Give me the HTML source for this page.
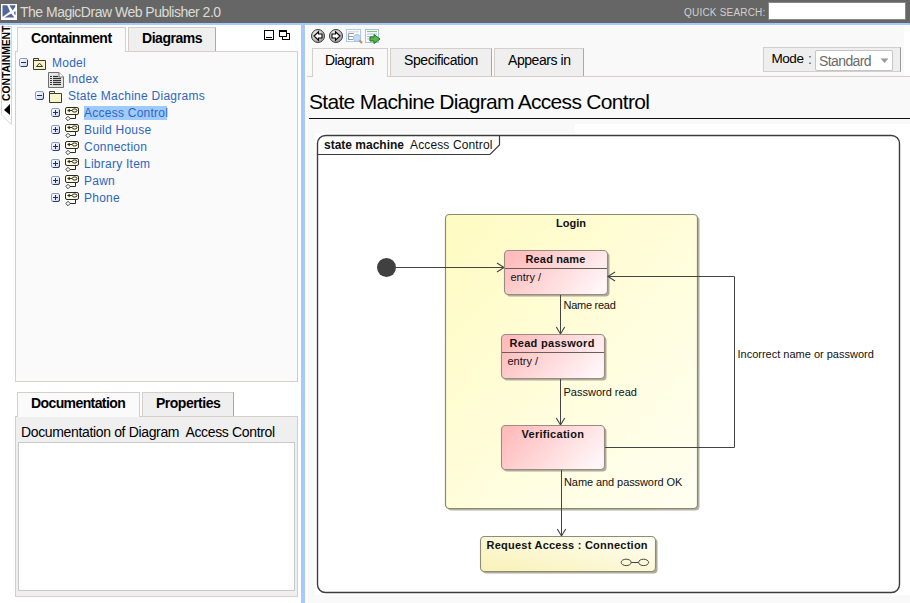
<!DOCTYPE html>
<html><head><meta charset="utf-8">
<style>
*{box-sizing:border-box;margin:0;padding:0}
html,body{width:910px;height:603px;overflow:hidden;background:#fff;font-family:"Liberation Sans",sans-serif;position:relative}
.a{position:absolute}
.t{position:absolute;white-space:nowrap;line-height:1}
#top{left:0;top:0;width:910px;height:23px;background:#666}
#bl{left:0;top:23px;width:910px;height:2px;background:#a8c9fb}
#split{left:301px;top:25px;width:4px;height:578px;background:#a8c9fb}
#rp{left:307px;top:25px;width:603px;height:578px;background:#f9f9f9}
.tab{position:absolute;border:1px solid #d4d0c8;border-bottom:none;background:#efefef}
.tabd{border-right-color:#a9a9a9}
.box{position:absolute;border:1px solid #d4d0c8}
.tree{color:#2d66c0;font-size:12px;letter-spacing:0.25px}
</style></head><body>
<div class="a" id="top"></div>
<div class="a" id="bl"></div>
<div class="a" id="split"></div>
<div class="a" style="left:305px;top:25px;width:2px;height:578px;background:#fff"></div>
<div class="a" id="rp"></div>

<!-- title bar -->
<div class="a" style="left:1px;top:4px;width:16px;height:16px;background:#fff"></div>
<svg class="a" style="left:1px;top:4px" width="16" height="16" viewBox="0 0 16 16">
  <polygon points="1.5,1.2 6.2,1.2 9,7.4 2.2,12.6 1.5,12.6" fill="#51669a"/>
  <polygon points="8.4,1.2 14.4,1.2 14.2,3 11.6,6.4" fill="#51669a"/>
  <polygon points="3.4,13.6 10.2,9.6 13.4,13.6" fill="#51669a"/>
  <polygon points="13,7.8 14.6,7.6 14.6,10.8 13.4,10.6" fill="#51669a"/>
</svg>
<div class="t" style="left:20px;top:5px;font-size:14px;letter-spacing:-0.5px;color:#dddcd4">The MagicDraw Web Publisher 2.0</div>
<div class="t" style="left:684px;top:8px;font-size:10px;letter-spacing:0.2px;color:#d0d0d0">QUICK SEARCH:</div>
<div class="a" style="left:768px;top:2px;width:138px;height:18px;background:#fff;border:1px solid #888"></div>

<!-- vertical containment tab -->
<svg class="a" style="left:0;top:25px" width="14" height="102" viewBox="0 0 14 102">
  <path d="M1.5,1.5 H11.5 V99.5 L1.5,90 Z" fill="#fff" stroke="#d6d6d6" stroke-width="1"/>
  <polygon points="4,85 10,79 10,90" fill="#000"/>
</svg>
<div class="t" style="left:1.5px;top:100.5px;font-size:10.3px;font-weight:700;color:#000;transform-origin:0 0;transform:rotate(-90deg)">CONTAINMENT</div>

<!-- left tabs -->
<div class="tab" style="left:17px;top:27px;width:109px;height:25px;background:#fafafa"></div>
<div class="tab tabd" style="left:128px;top:27px;width:88px;height:24px"></div>
<div class="t" style="left:31px;top:31px;font-size:14px;font-weight:700;letter-spacing:-0.45px">Containment</div>
<div class="t" style="left:142px;top:31px;font-size:14px;font-weight:700;letter-spacing:-0.45px">Diagrams</div>
<svg class="a" style="left:264px;top:30px" width="27" height="11">
  <rect x="0.5" y="0.5" width="9" height="9" fill="none" stroke="#000"/>
  <line x1="2" y1="7.5" x2="8" y2="7.5" stroke="#000"/>
  <rect x="18.5" y="3.5" width="7" height="6" fill="#fff" stroke="#000"/>
  <rect x="15.5" y="0.5" width="7" height="6" fill="#fff" stroke="#000"/>
  <line x1="15" y1="1.5" x2="23" y2="1.5" stroke="#000"/>
</svg>

<!-- tree box -->
<div class="box" style="left:15px;top:51px;width:283px;height:331px;background:#fafafa"></div>
<div class="a" style="left:18px;top:51px;width:107px;height:1px;background:#fafafa"></div>

<svg width="0" height="0" style="position:absolute"><defs><linearGradient id="tg" x1="0" y1="0" x2="1" y2="1"><stop offset="0" stop-color="#ffffff"/><stop offset="1" stop-color="#c9d3ee"/></linearGradient></defs></svg>
<svg class="a" style="left:19px;top:58px" width="9" height="9" viewBox="0 0 9 9"><defs></defs><rect x="0.5" y="0.5" width="8" height="8" rx="1.5" fill="url(#tg)" stroke="#8a9cc4"/><path d="M8.5,2 V7 Q8.5,8.5 7,8.5 H2" fill="none" stroke="#2c3f6e"/><line x1="2" y1="4.5" x2="7" y2="4.5" stroke="#1f2f5c"/></svg>
<svg class="a" style="left:33px;top:58px" width="14" height="13" viewBox="0 0 14 13"><path d="M0.5,0.5 H5.5 V2.5 H12.5 V11.5 H0.5 Z" fill="#f8f4cc" stroke="#3d3a28"/><line x1="0.5" y1="2.5" x2="5.5" y2="2.5" stroke="#3d3a28"/><path d="M3.5,8.5 L6.5,5.2 L9.5,8.5 Z" fill="none" stroke="#3d3a28" stroke-width="1"/></svg>
<div class="t tree" style="left:52px;top:57px">Model</div>
<svg class="a" style="left:48px;top:72px" width="16" height="16" viewBox="0 0 16 16"><path d="M0.5,0.5 H11 L15.5,5 V15.5 H0.5 Z" fill="#e6e6e6" stroke="#6f6f6f"/><path d="M11,0.5 V5 H15.5" fill="#fff" stroke="#6f6f6f"/><g stroke="#333" stroke-width="1.2"><line x1="2" y1="4.5" x2="4" y2="4.5"/><line x1="5" y1="4.5" x2="10" y2="4.5"/><line x1="2" y1="6.5" x2="4" y2="6.5"/><line x1="5" y1="6.5" x2="13" y2="6.5"/><line x1="2" y1="8.5" x2="4" y2="8.5"/><line x1="5" y1="8.5" x2="13" y2="8.5"/><line x1="2" y1="10.5" x2="4" y2="10.5"/><line x1="5" y1="10.5" x2="13" y2="10.5"/><line x1="2" y1="12.5" x2="4" y2="12.5"/><line x1="5" y1="12.5" x2="13" y2="12.5"/></g></svg>
<div class="t tree" style="left:68px;top:73px">Index</div>
<svg class="a" style="left:35px;top:91px" width="9" height="9" viewBox="0 0 9 9"><defs></defs><rect x="0.5" y="0.5" width="8" height="8" rx="1.5" fill="url(#tg)" stroke="#8a9cc4"/><path d="M8.5,2 V7 Q8.5,8.5 7,8.5 H2" fill="none" stroke="#2c3f6e"/><line x1="2" y1="4.5" x2="7" y2="4.5" stroke="#1f2f5c"/></svg>
<svg class="a" style="left:49px;top:91px" width="14" height="13" viewBox="0 0 14 13"><path d="M0.5,0.5 H5.5 V2.5 H12.5 V11.5 H0.5 Z" fill="#f8f4cc" stroke="#3d3a28"/><line x1="0.5" y1="2.5" x2="5.5" y2="2.5" stroke="#3d3a28"/></svg>
<div class="t tree" style="left:68px;top:90px">State Machine Diagrams</div>
<div class="a" style="left:84px;top:106px;width:83px;height:14px;background:#9fcbfc"></div>
<svg class="a" style="left:51px;top:108px" width="9" height="9" viewBox="0 0 9 9"><rect x="0.5" y="0.5" width="8" height="8" rx="1.5" fill="url(#tg)" stroke="#8a9cc4"/><path d="M8.5,2 V7 Q8.5,8.5 7,8.5 H2" fill="none" stroke="#2c3f6e"/><line x1="2" y1="4.5" x2="7" y2="4.5" stroke="#1f2f5c"/><line x1="4.5" y1="2" x2="4.5" y2="7" stroke="#1f2f5c"/></svg>
<svg class="a" style="left:65px;top:107px" width="15" height="15" viewBox="0 0 15 15"><rect x="0.5" y="0.5" width="13" height="7" rx="1.5" fill="#fbf9e0" stroke="#2e2b1e"/><path d="M2,3.5 L4.8,1.8 V5.2 Z" fill="#2e2b1e"/><line x1="4" y1="3.5" x2="7" y2="3.5" stroke="#2e2b1e"/><ellipse cx="9.6" cy="3.5" rx="2.4" ry="1.6" fill="none" stroke="#2e2b1e" stroke-width="1"/><path d="M10.5,7.5 V11.5 H5" fill="none" stroke="#2e2b1e"/><path d="M3,9.3 L5.2,11.5 L3,13.7 L0.8,11.5 Z" fill="#fff" stroke="#2e2b1e" stroke-width="0.9"/></svg>
<div class="t tree" style="left:84px;top:107px">Access Control</div>
<svg class="a" style="left:51px;top:125px" width="9" height="9" viewBox="0 0 9 9"><rect x="0.5" y="0.5" width="8" height="8" rx="1.5" fill="url(#tg)" stroke="#8a9cc4"/><path d="M8.5,2 V7 Q8.5,8.5 7,8.5 H2" fill="none" stroke="#2c3f6e"/><line x1="2" y1="4.5" x2="7" y2="4.5" stroke="#1f2f5c"/><line x1="4.5" y1="2" x2="4.5" y2="7" stroke="#1f2f5c"/></svg>
<svg class="a" style="left:65px;top:124px" width="15" height="15" viewBox="0 0 15 15"><rect x="0.5" y="0.5" width="13" height="7" rx="1.5" fill="#fbf9e0" stroke="#2e2b1e"/><path d="M2,3.5 L4.8,1.8 V5.2 Z" fill="#2e2b1e"/><line x1="4" y1="3.5" x2="7" y2="3.5" stroke="#2e2b1e"/><ellipse cx="9.6" cy="3.5" rx="2.4" ry="1.6" fill="none" stroke="#2e2b1e" stroke-width="1"/><path d="M10.5,7.5 V11.5 H5" fill="none" stroke="#2e2b1e"/><path d="M3,9.3 L5.2,11.5 L3,13.7 L0.8,11.5 Z" fill="#fff" stroke="#2e2b1e" stroke-width="0.9"/></svg>
<div class="t tree" style="left:84px;top:124px">Build House</div>
<svg class="a" style="left:51px;top:142px" width="9" height="9" viewBox="0 0 9 9"><rect x="0.5" y="0.5" width="8" height="8" rx="1.5" fill="url(#tg)" stroke="#8a9cc4"/><path d="M8.5,2 V7 Q8.5,8.5 7,8.5 H2" fill="none" stroke="#2c3f6e"/><line x1="2" y1="4.5" x2="7" y2="4.5" stroke="#1f2f5c"/><line x1="4.5" y1="2" x2="4.5" y2="7" stroke="#1f2f5c"/></svg>
<svg class="a" style="left:65px;top:141px" width="15" height="15" viewBox="0 0 15 15"><rect x="0.5" y="0.5" width="13" height="7" rx="1.5" fill="#fbf9e0" stroke="#2e2b1e"/><path d="M2,3.5 L4.8,1.8 V5.2 Z" fill="#2e2b1e"/><line x1="4" y1="3.5" x2="7" y2="3.5" stroke="#2e2b1e"/><ellipse cx="9.6" cy="3.5" rx="2.4" ry="1.6" fill="none" stroke="#2e2b1e" stroke-width="1"/><path d="M10.5,7.5 V11.5 H5" fill="none" stroke="#2e2b1e"/><path d="M3,9.3 L5.2,11.5 L3,13.7 L0.8,11.5 Z" fill="#fff" stroke="#2e2b1e" stroke-width="0.9"/></svg>
<div class="t tree" style="left:84px;top:141px">Connection</div>
<svg class="a" style="left:51px;top:159px" width="9" height="9" viewBox="0 0 9 9"><rect x="0.5" y="0.5" width="8" height="8" rx="1.5" fill="url(#tg)" stroke="#8a9cc4"/><path d="M8.5,2 V7 Q8.5,8.5 7,8.5 H2" fill="none" stroke="#2c3f6e"/><line x1="2" y1="4.5" x2="7" y2="4.5" stroke="#1f2f5c"/><line x1="4.5" y1="2" x2="4.5" y2="7" stroke="#1f2f5c"/></svg>
<svg class="a" style="left:65px;top:158px" width="15" height="15" viewBox="0 0 15 15"><rect x="0.5" y="0.5" width="13" height="7" rx="1.5" fill="#fbf9e0" stroke="#2e2b1e"/><path d="M2,3.5 L4.8,1.8 V5.2 Z" fill="#2e2b1e"/><line x1="4" y1="3.5" x2="7" y2="3.5" stroke="#2e2b1e"/><ellipse cx="9.6" cy="3.5" rx="2.4" ry="1.6" fill="none" stroke="#2e2b1e" stroke-width="1"/><path d="M10.5,7.5 V11.5 H5" fill="none" stroke="#2e2b1e"/><path d="M3,9.3 L5.2,11.5 L3,13.7 L0.8,11.5 Z" fill="#fff" stroke="#2e2b1e" stroke-width="0.9"/></svg>
<div class="t tree" style="left:84px;top:158px">Library Item</div>
<svg class="a" style="left:51px;top:176px" width="9" height="9" viewBox="0 0 9 9"><rect x="0.5" y="0.5" width="8" height="8" rx="1.5" fill="url(#tg)" stroke="#8a9cc4"/><path d="M8.5,2 V7 Q8.5,8.5 7,8.5 H2" fill="none" stroke="#2c3f6e"/><line x1="2" y1="4.5" x2="7" y2="4.5" stroke="#1f2f5c"/><line x1="4.5" y1="2" x2="4.5" y2="7" stroke="#1f2f5c"/></svg>
<svg class="a" style="left:65px;top:175px" width="15" height="15" viewBox="0 0 15 15"><rect x="0.5" y="0.5" width="13" height="7" rx="1.5" fill="#fbf9e0" stroke="#2e2b1e"/><path d="M2,3.5 L4.8,1.8 V5.2 Z" fill="#2e2b1e"/><line x1="4" y1="3.5" x2="7" y2="3.5" stroke="#2e2b1e"/><ellipse cx="9.6" cy="3.5" rx="2.4" ry="1.6" fill="none" stroke="#2e2b1e" stroke-width="1"/><path d="M10.5,7.5 V11.5 H5" fill="none" stroke="#2e2b1e"/><path d="M3,9.3 L5.2,11.5 L3,13.7 L0.8,11.5 Z" fill="#fff" stroke="#2e2b1e" stroke-width="0.9"/></svg>
<div class="t tree" style="left:84px;top:175px">Pawn</div>
<svg class="a" style="left:51px;top:193px" width="9" height="9" viewBox="0 0 9 9"><rect x="0.5" y="0.5" width="8" height="8" rx="1.5" fill="url(#tg)" stroke="#8a9cc4"/><path d="M8.5,2 V7 Q8.5,8.5 7,8.5 H2" fill="none" stroke="#2c3f6e"/><line x1="2" y1="4.5" x2="7" y2="4.5" stroke="#1f2f5c"/><line x1="4.5" y1="2" x2="4.5" y2="7" stroke="#1f2f5c"/></svg>
<svg class="a" style="left:65px;top:192px" width="15" height="15" viewBox="0 0 15 15"><rect x="0.5" y="0.5" width="13" height="7" rx="1.5" fill="#fbf9e0" stroke="#2e2b1e"/><path d="M2,3.5 L4.8,1.8 V5.2 Z" fill="#2e2b1e"/><line x1="4" y1="3.5" x2="7" y2="3.5" stroke="#2e2b1e"/><ellipse cx="9.6" cy="3.5" rx="2.4" ry="1.6" fill="none" stroke="#2e2b1e" stroke-width="1"/><path d="M10.5,7.5 V11.5 H5" fill="none" stroke="#2e2b1e"/><path d="M3,9.3 L5.2,11.5 L3,13.7 L0.8,11.5 Z" fill="#fff" stroke="#2e2b1e" stroke-width="0.9"/></svg>
<div class="t tree" style="left:84px;top:192px">Phone</div>

<!-- doc tabs -->
<div class="tab" style="left:17px;top:392px;width:123px;height:25px;background:#fafafa"></div>
<div class="tab tabd" style="left:142px;top:392px;width:92px;height:24px"></div>
<div class="t" style="left:31px;top:396px;font-size:14px;font-weight:700;letter-spacing:-0.6px">Documentation</div>
<div class="t" style="left:156px;top:396px;font-size:14px;font-weight:700;letter-spacing:-0.5px">Properties</div>
<div class="box" style="left:15px;top:416px;width:283px;height:181px;background:#efefef"></div>
<div class="a" style="left:18px;top:416px;width:121px;height:1px;background:#fafafa"></div>
<div class="t" style="left:21px;top:425px;font-size:14px;letter-spacing:-0.35px">Documentation of Diagram&nbsp; Access Control</div>
<div class="a" style="left:18px;top:442px;width:277px;height:149px;background:#fff;border:1px solid #c9c9c9"></div>


<!-- right panel toolbar -->
<svg class="a" style="left:311px;top:29px" width="70" height="16" viewBox="0 0 70 16">
  <defs>
    <radialGradient id="cg" cx="0.4" cy="0.35" r="0.7"><stop offset="0" stop-color="#f4f4f4"/><stop offset="0.6" stop-color="#c4c4c4"/><stop offset="1" stop-color="#8a8a8a"/></radialGradient>
  </defs>
  <circle cx="7" cy="7" r="6.5" fill="url(#cg)" stroke="#3a3a3a" stroke-width="1"/>
  <path d="M3,7 L7.5,2.8 V5 H11 V9 H7.5 V11.2 Z" fill="#fff" stroke="#000" stroke-width="1.1" stroke-linejoin="miter"/>
  <circle cx="25" cy="7" r="6.5" fill="url(#cg)" stroke="#3a3a3a" stroke-width="1"/>
  <path d="M29,7 L24.5,2.8 V5 H21 V9 H24.5 V11.2 Z" fill="#fff" stroke="#000" stroke-width="1.1" stroke-linejoin="miter"/>
  <rect x="35.5" y="0.5" width="14" height="12" fill="#fff" stroke="#a9c9f7"/>
  <rect x="37" y="2" width="11" height="1.5" fill="#e3ddd6"/>
  <path d="M37.5,4.5 H43 M37.5,4.5 V10.5 H42 M37.5,7.5 H42" fill="none" stroke="#9a9a9a" stroke-width="1.2"/>
  <circle cx="46" cy="9" r="3.6" fill="#c6dcf4" stroke="#a3c2e6"/>
  <path d="M48.5,11.5 L51,14" stroke="#c98a4e" stroke-width="2"/>
  <rect x="54.5" y="0.5" width="13" height="13" fill="#fff" stroke="#5a7ee8" stroke-dasharray="1,1"/>
  <line x1="56" y1="2.5" x2="66" y2="2.5" stroke="#7ccc6a" stroke-width="1.2"/>
  <g stroke="#a8b8f0" stroke-width="1"><line x1="56" y1="5" x2="66" y2="5"/><line x1="56" y1="7.5" x2="62" y2="7.5"/><line x1="56" y1="10" x2="60" y2="10"/></g>
  <path d="M59,8 H63 V5.5 L69,10 L63,14.5 V12 H59 Z" fill="#5cb548" stroke="#0e7a14" stroke-width="1"/>
</svg>

<!-- right tabs -->
<div class="a" style="left:307px;top:76px;width:603px;height:1px;background:#d4d0c8"></div>
<div class="tab" style="left:312px;top:48px;width:76px;height:29px;background:#f9f9f9"></div>
<div class="tab tabd" style="left:390px;top:48px;width:102px;height:28px"></div>
<div class="tab tabd" style="left:494px;top:48px;width:90px;height:28px"></div>
<div class="t" style="left:325px;top:53px;font-size:14px;letter-spacing:-0.59px">Diagram</div>
<div class="t" style="left:404px;top:53px;font-size:14px;letter-spacing:-0.42px">Specification</div>
<div class="t" style="left:508px;top:53px;font-size:14px;letter-spacing:-0.43px">Appears in</div>

<!-- mode -->
<div class="a" style="left:763px;top:47px;width:138px;height:25px;background:#eee;border:1px solid #d0d0d0;border-right-color:#9a9a9a"></div>
<div class="t" style="left:771.5px;top:52px;font-size:13.5px;letter-spacing:-0.45px">Mode</div>
<div class="t" style="left:808px;top:52px;font-size:14px;color:#555">:</div>
<div class="a" style="left:815px;top:50px;width:78px;height:21px;background:#fff;border:1px solid #c4c4c4;border-radius:2px"></div>
<div class="t" style="left:819px;top:54px;font-size:14px;letter-spacing:-0.6px;color:#6a6a6a">Standard</div>
<svg class="a" style="left:880px;top:58px" width="9" height="6"><path d="M0.5,0.5 H8.5 L4.5,5 Z" fill="#9a9a9a"/></svg>

<!-- title -->
<div class="t" style="left:309px;top:90.5px;font-size:21px;letter-spacing:-0.7px">State Machine Diagram Access Control</div>
<div class="a" style="left:309px;top:118px;width:601px;height:1px;background:#111"></div>


<div class="a" style="left:904px;top:25px;width:6px;height:51px;background:#fff"></div>
<div class="a" style="left:315px;top:133px;width:595px;height:462px;background:#fff"></div>
<div class="a" style="left:575px;top:124px;width:335px;height:9px;background:#fff"></div>
<svg class="a" style="left:0;top:0" width="910" height="603" viewBox="0 0 910 603" font-family="Liberation Sans" >
 <defs>
  <linearGradient id="ylg" x1="0" y1="0" x2="1" y2="1"><stop offset="0" stop-color="#fffbc2"/><stop offset="1" stop-color="#fffff2"/></linearGradient>
  <linearGradient id="pkg" x1="0" y1="0.3" x2="1" y2="0.7"><stop offset="0" stop-color="#ffbcbc"/><stop offset="1" stop-color="#fff6f8"/></linearGradient>
  <linearGradient id="rqg" x1="0" y1="1" x2="1" y2="0"><stop offset="0" stop-color="#f9f1b6"/><stop offset="1" stop-color="#fffff6"/></linearGradient>
 </defs>
 <!-- frame -->
 <rect x="317.5" y="135.5" width="582" height="457" rx="8" ry="8" fill="#fff" stroke="#3c3c3c" stroke-width="1.4"/>
 <path d="M317.5,154.5 H490 L499.5,145 V135.5" fill="none" stroke="#3c3c3c" stroke-width="1.2"/>
 <text x="324" y="149" font-size="12" font-weight="700" fill="#111">state machine</text>
 <text x="410" y="149" font-size="12" letter-spacing="0.13" fill="#111">Access Control</text>

 <!-- login -->
 <rect x="447.5" y="216.5" width="252" height="294" rx="4" fill="#b3b2a2"/>
 <rect x="445.5" y="214.5" width="252" height="294" rx="4" fill="url(#ylg)" stroke="#8a8a6c" stroke-width="1.2"/>
 <text x="571" y="227" font-size="11" font-weight="700" fill="#111" text-anchor="middle">Login</text>

 <!-- initial -->
 <circle cx="386.5" cy="267.5" r="9.5" fill="#404040"/>
 <line x1="396" y1="267.5" x2="504" y2="267.5" stroke="#444" stroke-width="1"/>
 <path d="M497,263 L504,267.5 L497,272" fill="none" stroke="#444" stroke-width="1.1"/>

 <!-- read name -->
 <rect x="506.5" y="252.5" width="103" height="44" rx="4" fill="#aeab9c"/>
 <rect x="504.5" y="250.5" width="103" height="44" rx="4" fill="url(#pkg)" stroke="#9c8c80" stroke-width="1.1"/>
 <line x1="505" y1="268.5" x2="607" y2="268.5" stroke="#6a5e58" stroke-width="1"/>
 <text x="525.5" y="263" font-size="11" letter-spacing="0.15" font-weight="700" fill="#111">Read name</text>
 <text x="510.5" y="281" font-size="11" fill="#111">entry /</text>

 <line x1="560.5" y1="295" x2="560.5" y2="334" stroke="#444"/>
 <path d="M556.3,327 L560.5,334 L564.7,327" fill="none" stroke="#444" stroke-width="1.1"/>
 <text x="563.5" y="309" font-size="11" letter-spacing="-0.27" fill="#111">Name read</text>

 <!-- read password -->
 <rect x="503.5" y="336.5" width="103" height="44" rx="4" fill="#aeab9c"/>
 <rect x="501.5" y="334.5" width="103" height="44" rx="4" fill="url(#pkg)" stroke="#9c8c80" stroke-width="1.1"/>
 <line x1="502" y1="352.5" x2="604" y2="352.5" stroke="#6a5e58" stroke-width="1"/>
 <text x="509.5" y="347" font-size="11" letter-spacing="0.3" font-weight="700" fill="#111">Read password</text>
 <text x="507.5" y="365" font-size="11" fill="#111">entry /</text>

 <line x1="560.5" y1="379" x2="560.5" y2="425" stroke="#444"/>
 <path d="M556.3,418 L560.5,425 L564.7,418" fill="none" stroke="#444" stroke-width="1.1"/>
 <text x="563.5" y="396" font-size="11" fill="#111">Password read</text>

 <!-- verification -->
 <rect x="503.5" y="427.5" width="103" height="44" rx="4" fill="#aeab9c"/>
 <rect x="501.5" y="425.5" width="103" height="44" rx="4" fill="url(#pkg)" stroke="#9c8c80" stroke-width="1.1"/>
 <text x="521.5" y="438" font-size="11" letter-spacing="0.28" font-weight="700" fill="#111">Verification</text>

 <line x1="561.5" y1="470" x2="561.5" y2="536" stroke="#444"/>
 <path d="M557.3,529 L561.5,536 L565.7,529" fill="none" stroke="#444" stroke-width="1.1"/>
 <text x="564" y="486" font-size="11" letter-spacing="-0.08" fill="#111">Name and password OK</text>

 <!-- loop -->
 <path d="M605,447.5 H734.5 V276.5 H608" fill="none" stroke="#444" stroke-width="1"/>
 <path d="M615,272 L608,276.5 L615,281" fill="none" stroke="#444" stroke-width="1.1"/>
 <text x="737.5" y="358" font-size="11" fill="#111">Incorrect name or password</text>

 <!-- request access -->
 <rect x="482.5" y="538.5" width="175" height="35" rx="4" fill="#aeab9c"/>
 <rect x="480.5" y="536.5" width="175" height="35" rx="4" fill="url(#rqg)" stroke="#8e8c72" stroke-width="1.1"/>
 <text x="486.5" y="549" font-size="11" letter-spacing="0.24" font-weight="700" fill="#111">Request Access : Connection</text>
 <ellipse cx="626.2" cy="562.4" rx="5" ry="3.2" fill="none" stroke="#444" stroke-width="1"/>
 <ellipse cx="643.6" cy="562.4" rx="5" ry="3.2" fill="none" stroke="#444" stroke-width="1"/>
 <line x1="631.2" y1="562.5" x2="638.6" y2="562.5" stroke="#444"/>
</svg>


</body></html>
